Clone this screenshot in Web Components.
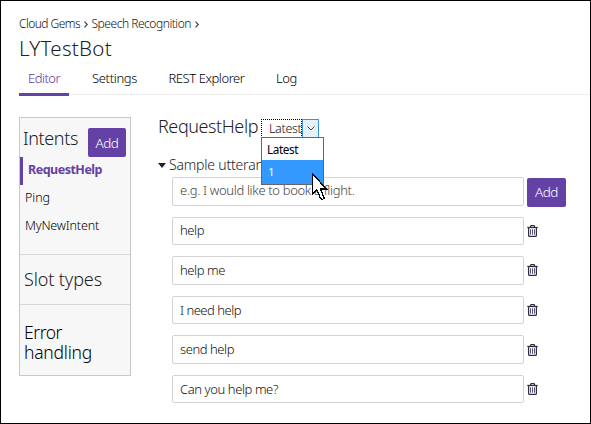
<!DOCTYPE html>
<html lang="en">
<head>
<meta charset="utf-8">
<title>LYTestBot</title>
<style>
html,body{margin:0;height:100%}
body{font-family:"Noto Sans","Open Sans",sans-serif;font-size:13px;font-weight:350;color:#222;background:#fff;overflow:hidden}
</style>
</head>
<body>
<bot-page></bot-page>
<script>
const define=(name,html,setup)=>{
  const t=document.createElement('template');t.innerHTML=html;
  customElements.define(name,class extends HTMLElement{
    constructor(){super();this.attachShadow({mode:'open'}).append(t.content.cloneNode(true));}
    connectedCallback(){if(setup)setup(this,this.shadowRoot);}
  });
};

/* A single line of text whose tracking is adjusted to its "w" attribute. */
define('fit-text','<style>:host{display:block;white-space:pre;flex:none}span{display:inline-block}</style><span><slot></slot></span>',(el,r)=>{
  const s=r.querySelector('span'),w=+el.getAttribute('w'),n=el.textContent.length;
  el.style.width=w+'px';
  const size=el.getAttribute('size');if(size)el.style.fontSize=size+'px';
  if(n>1)s.style.letterSpacing=((w-s.getBoundingClientRect().width)/n)+'px';
});

define('ui-button',`<style>
:host{display:flex;justify-content:center;align-items:center;box-sizing:border-box;width:39px;height:29px;background:#6441a5;color:#fff;border-radius:2px;flex:none;line-height:20px}
</style><fit-text w="23" size="13.5">Add</fit-text>`);

define('trash-icon',`<style>:host{display:block;width:11px;height:12px;flex:none}svg{display:block}</style>
<svg width="11" height="12" viewBox="0 0 11 12" fill="none" stroke="#303038">
<path d="M.3 2.5h10.4" stroke-width="1.3"/><path d="M3.5 2.2V1.4Q3.5.7 4.2.7h2.6q.7 0 .7.7v.8" stroke-width="1.2"/>
<path d="M1.6 3v7.4q0 .9.9.9h6q.9 0 .9-.9V3" stroke-width="1.2"/><path d="M3.5 4.3v5.4M5.5 4.3v5.4M7.5 4.3v5.4" stroke="#5a4c80" stroke-width="1"/></svg>`);

define('bread-crumb',`<style>
:host{display:flex;align-items:center;height:18px;line-height:18px;color:#111}
svg{margin:1px 3.5px 0 4px;flex:none}</style>
<fit-text w="61" size="12">Cloud Gems</fit-text>
<svg width="4" height="7" fill="none" stroke="#333" stroke-width="1.1"><path d="M.5.7 3.3 3.5.5 6.3"/></svg>
<fit-text w="99.5" size="12">Speech Recognition</fit-text>
<svg width="4" height="7" fill="none" stroke="#333" stroke-width="1.1"><path d="M.5.7 3.3 3.5.5 6.3"/></svg>`);

define('tab-item',`<style>
:host{display:flex;box-sizing:border-box;height:27px;padding:0 9px;line-height:18px;color:#000;border-bottom:3px solid transparent}
:host([active]){color:#5a33a3;border-color:#6441a5}</style><slot></slot>`);

define('tab-bar',`<style>
:host{display:flex;height:27px;gap:13.5px;background:linear-gradient(#eee,#eee) 0 25px/100% 1px no-repeat}
</style>
<tab-item active><fit-text w="32">Editor</fit-text></tab-item>
<tab-item style="margin-left:.5px"><fit-text w="45">Settings</fit-text></tab-item>
<tab-item><fit-text w="76">REST Explorer</fit-text></tab-item>
<tab-item><fit-text w="21">Log</fit-text></tab-item>`);

define('intent-item',`<style>
:host{display:flex;align-items:center;box-sizing:border-box;height:28px;padding:0 0 2px 5px;color:#000;line-height:18px}
:host([active]){border-left:3px solid #6441a5;color:#6441a5;font-weight:700}
</style><slot></slot>`);

define('side-nav',`<style>
:host{display:block;box-sizing:border-box;width:112px;height:259px;border:1px solid #c8c8c8;background:#f7f7f7;flex:none;font-size:13px}
header{display:flex;justify-content:space-between;height:39px;padding:0 4px 0 3px;box-sizing:border-box}
header fit-text{margin-top:7px;line-height:26px}
header ui-button{margin-top:10px;width:38px}
section{box-sizing:border-box;border-bottom:1px solid #d8d8d8;font-weight:300;color:#222}
.intents{height:137px;font-weight:350}
.slots{height:50px;padding:11px 4px 0;line-height:26px}
.error{border:0;padding:17px 4px 0;line-height:20px;color:#000}
</style>
<section class="intents"><header><fit-text w="55" size="18" style="font-weight:300">Intents</fit-text><ui-button></ui-button></header>
<intent-item active><fit-text w="74" size="12.5">RequestHelp</fit-text></intent-item>
<intent-item><fit-text w="25" size="12.5">Ping</fit-text></intent-item>
<intent-item><fit-text w="74" size="12.5">MyNewIntent</fit-text></intent-item></section>
<section class="slots"><fit-text w="78" size="18">Slot types</fit-text></section>
<section class="error"><fit-text w="38" size="17.5">Error</fit-text><fit-text w="68" size="17.5">handling</fit-text></section>`);

define('mouse-cursor',`<style>:host{display:block;width:16px;height:28px}svg{display:block}</style>
<svg width="16" height="28" shape-rendering="crispEdges"><path d="M.5.8v20l4.2-4 3.8 8.4q1.5 2.2 3.6 0L8.6 16h5.8Z" fill="#fff" stroke="#000" stroke-width="1.3"/></svg>`);

define('version-select',`<style>
:host{display:block;position:relative;width:58px;height:19px;color:#111;flex:none;font-weight:400}
.box{display:flex;height:19px;box-sizing:border-box}
.value{width:41px;box-sizing:border-box;border:1px dotted #000;padding-left:7px;line-height:17px;font-weight:350}
.arrow{width:17px;height:19px;box-sizing:border-box;border:1px solid #3c93dc;background:#e5f1fb;display:flex;align-items:center;justify-content:center}
.menu{position:absolute;left:0;top:18px;width:63px;height:48px;box-sizing:border-box;border:1px solid #666;background:#fff;z-index:2;color:#000}
.opt{display:flex;height:22px;line-height:23px;padding-left:5px}
.opt.on{height:24px;line-height:24px;padding-left:6px;background:#3399ff;color:#fff}
mouse-cursor{position:absolute;left:51px;top:54px;z-index:3}
</style>
<div class="box"><div class="value"><fit-text w="32.5" size="12.5">Latest</fit-text></div><div class="arrow"><svg width="8" height="5" fill="none" stroke="#444"><path d="M.5.5 4 4 7.5.5"/></svg></div></div>
<div class="menu"><div class="opt"><fit-text w="31" size="11.7">Latest</fit-text></div><div class="opt on"><fit-text w="6" size="11.5">1</fit-text></div></div>
<mouse-cursor></mouse-cursor>`);

define('text-field',`<style>
:host{display:flex;align-items:center;box-sizing:border-box;width:352px;height:28.5px;padding:0 7px 1px;border:1px solid #d3d3d3;border-radius:2px;color:#111;line-height:20px;flex:none}
:host([hint]){color:#444;padding-bottom:2px}
</style><slot></slot>`);

define('utterance-row',`<style>
:host{display:flex;gap:3px;height:28.5px;align-items:center}
</style><slot></slot>`);

define('intent-editor',`<style>
:host{display:block;width:420px}
.head{display:flex;gap:3px;height:30px}
.head>fit-text{line-height:24px;margin-top:-3px;font-weight:300;color:#222}
version-select{margin-top:2px}
.sub{display:flex;align-items:center;gap:3px;line-height:20px;padding-top:6px;box-sizing:border-box;height:30px}
.sub svg{flex:none}
.rows{display:grid;gap:11.1px;padding-left:14px}
ui-button{margin-top:2px}
</style>
<div class="head"><fit-text w="100" size="18">RequestHelp</fit-text><version-select></version-select></div>
<div class="sub"><svg width="8" height="5"><path d="M0 0h8L4 5Z" fill="#222"/></svg><fit-text w="115" size="14">Sample utterances</fit-text></div>
<div class="rows">
<utterance-row><text-field hint><fit-text w="174.5">e.g. I would like to book a flight.</fit-text></text-field><ui-button></ui-button></utterance-row>
<utterance-row><text-field><fit-text w="24">help</fit-text></text-field><trash-icon></trash-icon></utterance-row>
<utterance-row><text-field><fit-text w="45">help me</fit-text></text-field><trash-icon></trash-icon></utterance-row>
<utterance-row><text-field><fit-text w="61">I need help</fit-text></text-field><trash-icon></trash-icon></utterance-row>
<utterance-row><text-field><fit-text w="54">send help</fit-text></text-field><trash-icon></trash-icon></utterance-row>
<utterance-row><text-field><fit-text w="98">Can you help me?</fit-text></text-field><trash-icon></trash-icon></utterance-row>
</div>`);

define('bot-page',`<style>
:host{display:flex;flex-direction:column;box-sizing:border-box;width:591px;height:424px;border:1px solid #000;padding:14px 0 0 18px;background:#fff}
h1{margin:0;height:36px;line-height:31px;font-weight:300;color:#222}
main{display:flex;gap:27px;padding-top:21px}
</style>
<bread-crumb></bread-crumb>
<h1><fit-text w="93" size="20.5">LYTestBot</fit-text></h1>
<tab-bar></tab-bar>
<main><side-nav></side-nav><intent-editor></intent-editor></main>`);
</script>
</body>
</html>
